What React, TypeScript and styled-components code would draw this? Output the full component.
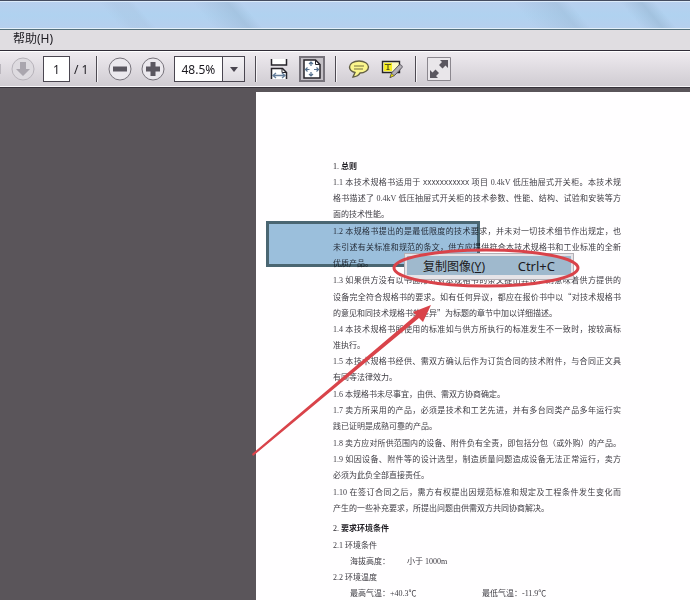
import React from "react";
import styled, { createGlobalStyle } from "styled-components";

const uiFont = `"Noto Sans", "Noto Sans CJK SC", sans-serif`;

const GlobalStyle = createGlobalStyle`
  * { box-sizing: border-box; }
  body { margin: 0; background: #5a555a; font-family: ${uiFont}; font-size: 12px; color: #1c1a20; }
  button, input, select { font: inherit; color: inherit; }
`;

const Window = styled.main`
  display: flex;
  flex-direction: column;
  height: 100vh;
  overflow: hidden;
`;

const TitleBar = styled.header`
  flex: none;
  height: 30px;
  border-top: 1px solid #454c60;
  border-bottom: 1px solid #54707c;
  box-shadow: inset 0 1px #dcebfa, inset 0 -1px #e4f0fa;
  background:
    linear-gradient(50deg, transparent 0 17%, #a3bdd840 19% 21%, transparent 22% 30%, #94b3cf70 35%, transparent 37% 75%, #94b3cf60 81%, transparent 83% 90%, #94b3cf80 93%, transparent 95%),
    linear-gradient(#b9cfee, #b0d2f0 50%, #b6cfee);
`;

const MenuBar = styled.nav`
  flex: none;
  display: flex;
  align-items: center;
  height: 21px;
  padding: 0 0 2px 13px;
  background: #e0dde1;
  border-bottom: 1px solid #302c38;
`;

const MenuButton = styled.button`
  padding: 0;
  border: 0;
  background: none;
  line-height: 18px;
`;

const Toolbar = styled.div`
  flex: none;
  display: flex;
  align-items: center;
  height: 37px;
  padding-bottom: 1px;
  border-top: 1px solid #fff;
  border-bottom: 1px solid #343038;
  box-shadow: inset 0 -1px #f5f3f6;
  background: linear-gradient(#eeeaef, #cfcbd1);
`;

const Group = styled.div<{ $gap: number; $before?: number; $after: number }>`
  display: flex;
  align-items: center;
  gap: ${(p) => p.$gap}px;
  padding-left: ${(p) => p.$before ?? 0}px;
  padding-right: ${(p) => p.$after}px;
`;

const Divider = styled.span`
  width: 2px;
  height: 26px;
  background: #4e4a52;
  border-right: 1px solid #f6f4f7;
`;

const IconButton = styled.button<{ $size: number; $active?: boolean }>`
  display: grid;
  place-items: center;
  width: ${(p) => p.$size}px;
  height: ${(p) => p.$size}px;
  padding: 0;
  border: ${(p) => (p.$active ? "2px solid #77737b" : "0")};
  background: ${(p) => (p.$active ? "#c4c0c6" : "none")};
  svg { display: block; }
`;

const CutButton = styled.button`
  width: 1px;
  height: 10px;
  padding: 0;
  border: 0;
  background: #bbb7be;
`;

const PageInput = styled.input`
  width: 27px;
  height: 26px;
  padding: 0;
  border: 1px solid #4a4650;
  background: #fff;
  text-align: center;
`;

const ZoomBox = styled.label`
  position: relative;
  display: flex;
  width: 71px;
  height: 26px;
  background: #fff;
  border: 1px solid #4a4650;
`;

const ZoomSelect = styled.select`
  appearance: none;
  width: 100%;
  padding: 0 0 0 6px;
  border: 0;
  background: none;
`;

const ZoomArrow = styled.span`
  position: absolute;
  inset: 0 0 0 auto;
  width: 22px;
  display: grid;
  place-items: center;
  border-left: 1px solid #4a4650;
  background: linear-gradient(#f4f2f5, #dedbe0);
  pointer-events: none;
`;

const Viewer = styled.section`
  position: relative;
  flex: 1;
  min-height: 0;
  display: flex;
  padding: 4px 0 0 256px;
  background: #5a555a;
`;

const Sheet = styled.article`
  flex: 1;
  padding: 67px 69px 0 77px;
  background: #fffeff;
  overflow: hidden;
  font-family: "Liberation Serif", "Noto Sans CJK SC", serif;
  font-size: 8px;
  line-height: 16px;
  color: #3d3b42;
`;

const Heading = styled.h2<{ $spaced?: boolean }>`
  margin: ${(p) => (p.$spaced ? "4px 0 1px" : "0")};
  font-size: 8px;
  line-height: 16px;
  font-weight: 700;
  color: #1e1c22;
`;

const HeadingNumber = styled.span`
  font-weight: 400;
`;

const Clause = styled.p<{ $spaced?: boolean }>`
  margin: 0 0 ${(p) => (p.$spaced ? 1 : 0)}px;
`;

const Line = styled.span<{ $full: boolean }>`
  display: block;
  height: 16px;
  white-space: nowrap;
  text-align-last: ${(p) => (p.$full ? "justify" : "left")};
`;

const Blank = styled.span`
  font-family: "Liberation Mono", monospace;
  font-size: 7px;
`;

const WideQuote = styled.span`
  font-family: "Noto Sans CJK SC", sans-serif;
`;

const Values = styled.p<{ $first: number }>`
  display: grid;
  grid-template-columns: ${(p) => p.$first}px 1fr;
  margin: 0;
  padding-left: 17px;
  white-space: nowrap;
`;

const Selection = styled.div`
  position: absolute;
  left: 266px;
  top: 133px;
  width: 214px;
  height: 46px;
  border: 3px solid #4a6672;
  background: #9bc0dc;
  mix-blend-mode: multiply;
`;

const ContextMenu = styled.div`
  position: absolute;
  left: 404px;
  top: 165px;
  width: 170px;
  padding: 2px 2px 4px;
  border: 1px solid #b4b0b6;
  background: #e6e4e8;
`;

const ContextItem = styled.button`
  display: flex;
  justify-content: space-between;
  align-items: center;
  width: 100%;
  height: 19px;
  padding: 0 16px;
  border: 0;
  background: #9fb9cd;
`;

const Shortcut = styled.span`
  font-size: 13px;
`;

const Markup = styled.svg`
  position: absolute;
  left: 250px;
  top: 152px;
  pointer-events: none;
`;

type ClauseData = { lines: string[]; spaced?: boolean; lastFull?: boolean };

const clauses: ClauseData[] = [
  { spaced: true, lines: ["1.1 本技术规格书适用于 XXXXXXXXXXX 项目 0.4kV 低压抽屉式开关柜。本技术规", "格书描述了 0.4kV 低压抽屉式开关柜的技术参数、性能、结构、试验和安装等方", "面的技术性能。"] },
  { spaced: true, lines: ["1.2 本规格书提出的是最低限度的技术要求，并未对一切技术细节作出规定，也", "未引述有关标准和规范的条文，供方应提供符合本技术规格书和工业标准的全新", "优质产品。"] },
  { spaced: true, lines: ["1.3 如果供方没有以书面形式对本规格书的条文提出异议，则意味着供方提供的", "设备完全符合规格书的要求。如有任何异议，都应在报价书中以“对技术规格书", "的意见和同技术规格书的差异”为标题的章节中加以详细描述。"] },
  { lines: ["1.4 本技术规格书所使用的标准如与供方所执行的标准发生不一致时，按较高标", "准执行。"] },
  { spaced: true, lines: ["1.5 本技术规格书经供、需双方确认后作为订货合同的技术附件，与合同正文具", "有同等法律效力。"] },
  { lines: ["1.6 本规格书未尽事宜，由供、需双方协商确定。"] },
  { spaced: true, lines: ["1.7 卖方所采用的产品，必须是技术和工艺先进，并有多台同类产品多年运行实", "践已证明是成熟可靠的产品。"] },
  { lastFull: true, lines: ["1.8 卖方应对所供范围内的设备、附件负有全责，即包括分包（或外购）的产品。"] },
  { spaced: true, lines: ["1.9 如因设备、附件等的设计选型，制造质量问题造成设备无法正常运行，卖方", "必须为此负全部直接责任。"] },
  { lines: ["1.10 在签订合同之后，需方有权提出因规范标准和规定及工程条件发生变化而", "产生的一些补充要求，所提出问题由供需双方共同协商解决。"] },
];

const renderText = (text: string) =>
  text.split(/(X{2,}|[“”])/).map((part, i) => {
    if (part.startsWith("XX")) return <Blank key={i}>{part}</Blank>;
    if (part === "“" || part === "”") return <WideQuote key={i}>{part}</WideQuote>;
    return part;
  });

const RoundIcon = ({ kind, muted }: { kind: "down" | "minus" | "plus"; muted?: boolean }) => (
  <svg width="24" height="24" viewBox="0 0 24 24">
    <circle cx="12" cy="12" r="11" fill={muted ? "#dedbe0" : "#ebe8ed"} stroke={muted ? "#b7b3ba" : "#77737b"} />
    {kind === "down" && <path d="M9 5h6v7h4l-7 7-7-7h4z" fill="#aaa6ae" />}
    {kind !== "down" && <path d="M5 9.500h14v5H5z" fill="#5b5760" />}
    {kind === "plus" && <path d="M9.500 5h5v14h-5z" fill="#5b5760" />}
  </svg>
);

const FitWidthIcon = () => (
  <svg width="18" height="22" viewBox="0 0 18 22" fill="none">
    <path d="M1.500 1v6h15V1" fill="#fff" stroke="#27242b" strokeWidth="1.500" />
    <path d="M1.500 21V10.500h11l4 4V21" fill="#fff" stroke="#27242b" strokeWidth="1.500" />
    <path d="M12 10.500v4h4.500" stroke="#27242b" />
    <path d="M3 17.500h12M6 15l-3 2.500L6 20M12 15l3 2.500-3 2.500" stroke="#657e9b" strokeWidth="1.300" />
  </svg>
);

const FitPageIcon = () => (
  <svg width="18" height="20" viewBox="0 0 18 20" fill="none">
    <path d="M1 1h11.500L17 5.500V19H1z" fill="#fff" stroke="#27242b" strokeWidth="1.500" />
    <path d="M12.500 1v4.500H17" stroke="#27242b" />
    <path d="M8 3v4M8 13v4M2.500 10.500h4M11 10.500h4.500M6 5l2-2 2 2M6 15l2 2 2-2M4.500 8.500l-2 2 2 2M13.500 8.500l2 2-2 2" stroke="#55718f" strokeWidth="1.200" />
  </svg>
);

const CommentIcon = () => (
  <svg width="22" height="18" viewBox="0 0 22 18">
    <path d="M11 1c5.500 0 9.500 2.600 9.500 6s-4 6-8.500 6c-1 2-3 3.500-7 4l2-4.500C3.500 11.500 1.500 9.500 1.500 7c0-3.400 4-6 9.500-6z" fill="#faf58c" stroke="#625f45" strokeWidth="1.400" />
    <path d="M6 6h10M6 9h9" stroke="#77733f" />
  </svg>
);

const HighlightIcon = () => (
  <svg width="22" height="20" viewBox="0 0 22 20">
    <path d="M1.500 2.500h17v11h-17z" fill="#fdfbc0" stroke="#27242b" strokeWidth="1.400" />
    <path d="M3 4h8v8H3z" fill="#f7ee20" />
    <path d="M4.500 6V5.500h5V6M7 5.500v5M5.500 10.500h3" stroke="#5d5a18" strokeWidth="1.200" fill="none" />
    <path d="M9 18.500l2-5 7-7.500c1.500-1 4 1 3 2.500l-7 7.500z" fill="#b3b0b7" stroke="#57535b" />
    <path d="M9 18.500l1.500-4 2.800 2.200z" fill="#f2e800" stroke="#49454d" strokeWidth=".6" />
  </svg>
);

const FullScreenIcon = () => (
  <svg width="24" height="24" viewBox="0 0 24 24">
    <path d="M.5.5h23v23H.5z" fill="#e9e6ea" stroke="#8b878e" />
    <path d="M13 3h8v8l-2.500-2.500-3 3-3.500-3.500 3-3zM11 21H3v-8l2.500 2.500 3-3L12 16l-3 3z" fill="#5b5760" />
  </svg>
);

export default function App() {
  return (
    <Window>
      <GlobalStyle />
      <TitleBar />
      <MenuBar aria-label="菜单">
        <MenuButton>帮助(H)</MenuButton>
      </MenuBar>
      <Toolbar role="toolbar">
        <CutButton aria-label="上一页" />
        <Group $gap={8} $before={10} $after={4}>
          <IconButton $size={24} aria-label="下一页"><RoundIcon kind="down" muted /></IconButton>
          <PageInput aria-label="页码" defaultValue="1" />
        </Group>
        <Group $gap={0} $after={8}>/ 1</Group>
        <Divider />
        <Group $gap={9} $before={10} $after={8}>
          <IconButton $size={24} aria-label="缩小"><RoundIcon kind="minus" /></IconButton>
          <IconButton $size={24} aria-label="放大"><RoundIcon kind="plus" /></IconButton>
          <ZoomBox>
            <ZoomSelect aria-label="缩放比例" defaultValue="48.5%">
              <option>48.5%</option>
              <option>100%</option>
            </ZoomSelect>
            <ZoomArrow><svg width="8" height="5"><path d="M0 0h8L4 5z" fill="#4a4650" /></svg></ZoomArrow>
          </ZoomBox>
        </Group>
        <Group $gap={0} $before={2} $after={0}><Divider /></Group>
        <Group $gap={8} $before={10} $after={10}>
          <IconButton $size={24} aria-label="适合宽度"><FitWidthIcon /></IconButton>
          <IconButton $size={26} $active aria-label="适合页面"><FitPageIcon /></IconButton>
        </Group>
        <Divider />
        <Group $gap={9} $before={10} $after={11}>
          <IconButton $size={24} aria-label="添加附注"><CommentIcon /></IconButton>
          <IconButton $size={24} aria-label="高亮文本"><HighlightIcon /></IconButton>
        </Group>
        <Divider />
        <Group $gap={0} $before={10} $after={0}>
          <IconButton $size={24} aria-label="全屏"><FullScreenIcon /></IconButton>
        </Group>
      </Toolbar>
      <Viewer>
        <Sheet lang="zh-CN">
          <Heading><HeadingNumber>1.</HeadingNumber> 总则</Heading>
          {clauses.map((clause) => (
            <Clause key={clause.lines[0]} $spaced={clause.spaced}>
              {clause.lines.map((line, i) => (
                <Line key={line} $full={i < clause.lines.length - 1 || !!clause.lastFull}>{renderText(line)}</Line>
              ))}
            </Clause>
          ))}
          <Heading $spaced><HeadingNumber>2.</HeadingNumber> 要求环境条件</Heading>
          <Clause>2.1 环境条件</Clause>
          <Values $first={57}><span>海拔高度：</span><span>小于 1000m</span></Values>
          <Clause>2.2 环境温度</Clause>
          <Values $first={132}><span>最高气温：+40.3℃</span><span>最低气温：-11.9℃</span></Values>
        </Sheet>
        <Selection />
        <ContextMenu role="menu">
          <ContextItem role="menuitem">
            <span>复制图像(<u>Y</u>)</span>
            <Shortcut>Ctrl+C</Shortcut>
          </ContextItem>
        </ContextMenu>
        <Markup width="336" height="220" viewBox="0 0 336 220">
          <ellipse cx="236" cy="28" rx="92" ry="18" fill="none" stroke="#d9434a" strokeWidth="3" />
          <path d="M2 214L166 75l-3-3 18-7-8 17-4-4L3 216z" fill="#d9434a" />
        </Markup>
      </Viewer>
    </Window>
  );
}
